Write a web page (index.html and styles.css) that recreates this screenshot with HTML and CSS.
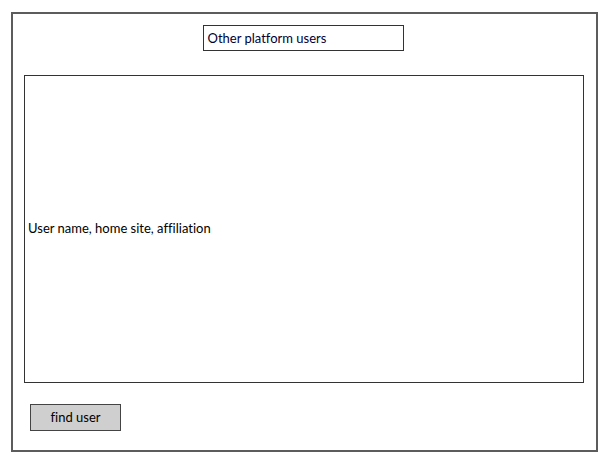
FILE: index.html
```html
<!DOCTYPE html>
<html>
<head>
<meta charset="utf-8">
<link rel="stylesheet" href="styles.css">
</head>
<body>
<div class="frame">
  <div class="title-row">
    <div class="title-box">Other platform users</div>
  </div>
  <div class="list-box">
    <span class="list-text">User name, home site, affiliation</span>
  </div>
  <div class="actions">
    <button class="btn">find user</button>
  </div>
</div>
</body>
</html>
```
FILE: styles.css
```css
* { box-sizing: border-box; }
html, body { margin: 0; padding: 0; background: #fff; }
body {
  font-family: "Comic Sans MS", Lato, "Open Sans", sans-serif;
  font-size: 13px;
  color: #000;
  font-variant-ligatures: none;
}
.frame {
  margin: 12px 0 0 11px;
  width: 587px;
  height: 440px;
  border: 2px solid #5c5c5c;
  padding: 11px 12px 0 11px;
  display: flex;
  flex-direction: column;
}
.title-row {
  display: flex;
  justify-content: center;
  padding-right: 2px;
}
.title-box {
  width: 201px;
  height: 26px;
  border: 1.5px solid #333;
  padding: 4px 0 0 4px;
  color: #000033;
  line-height: 16px;
}
.list-box {
  margin-top: 24px;
  width: 560px;
  height: 308px;
  border: 1.5px solid #333;
  display: flex;
  align-items: center;
  padding: 0 0 2px 3px;
}
.list-text { color: #000; }
.actions {
  margin-top: 21px;
  padding-left: 6px;
}
.btn {
  width: 91px;
  height: 27px;
  background: #cfcfcf;
  border: 1.5px solid #444;
  border-radius: 0;
  font-family: inherit;
  font-size: 13px;
  font-variant-ligatures: none;
  color: #000;
  padding: 0 0 1px 0;
}
```
